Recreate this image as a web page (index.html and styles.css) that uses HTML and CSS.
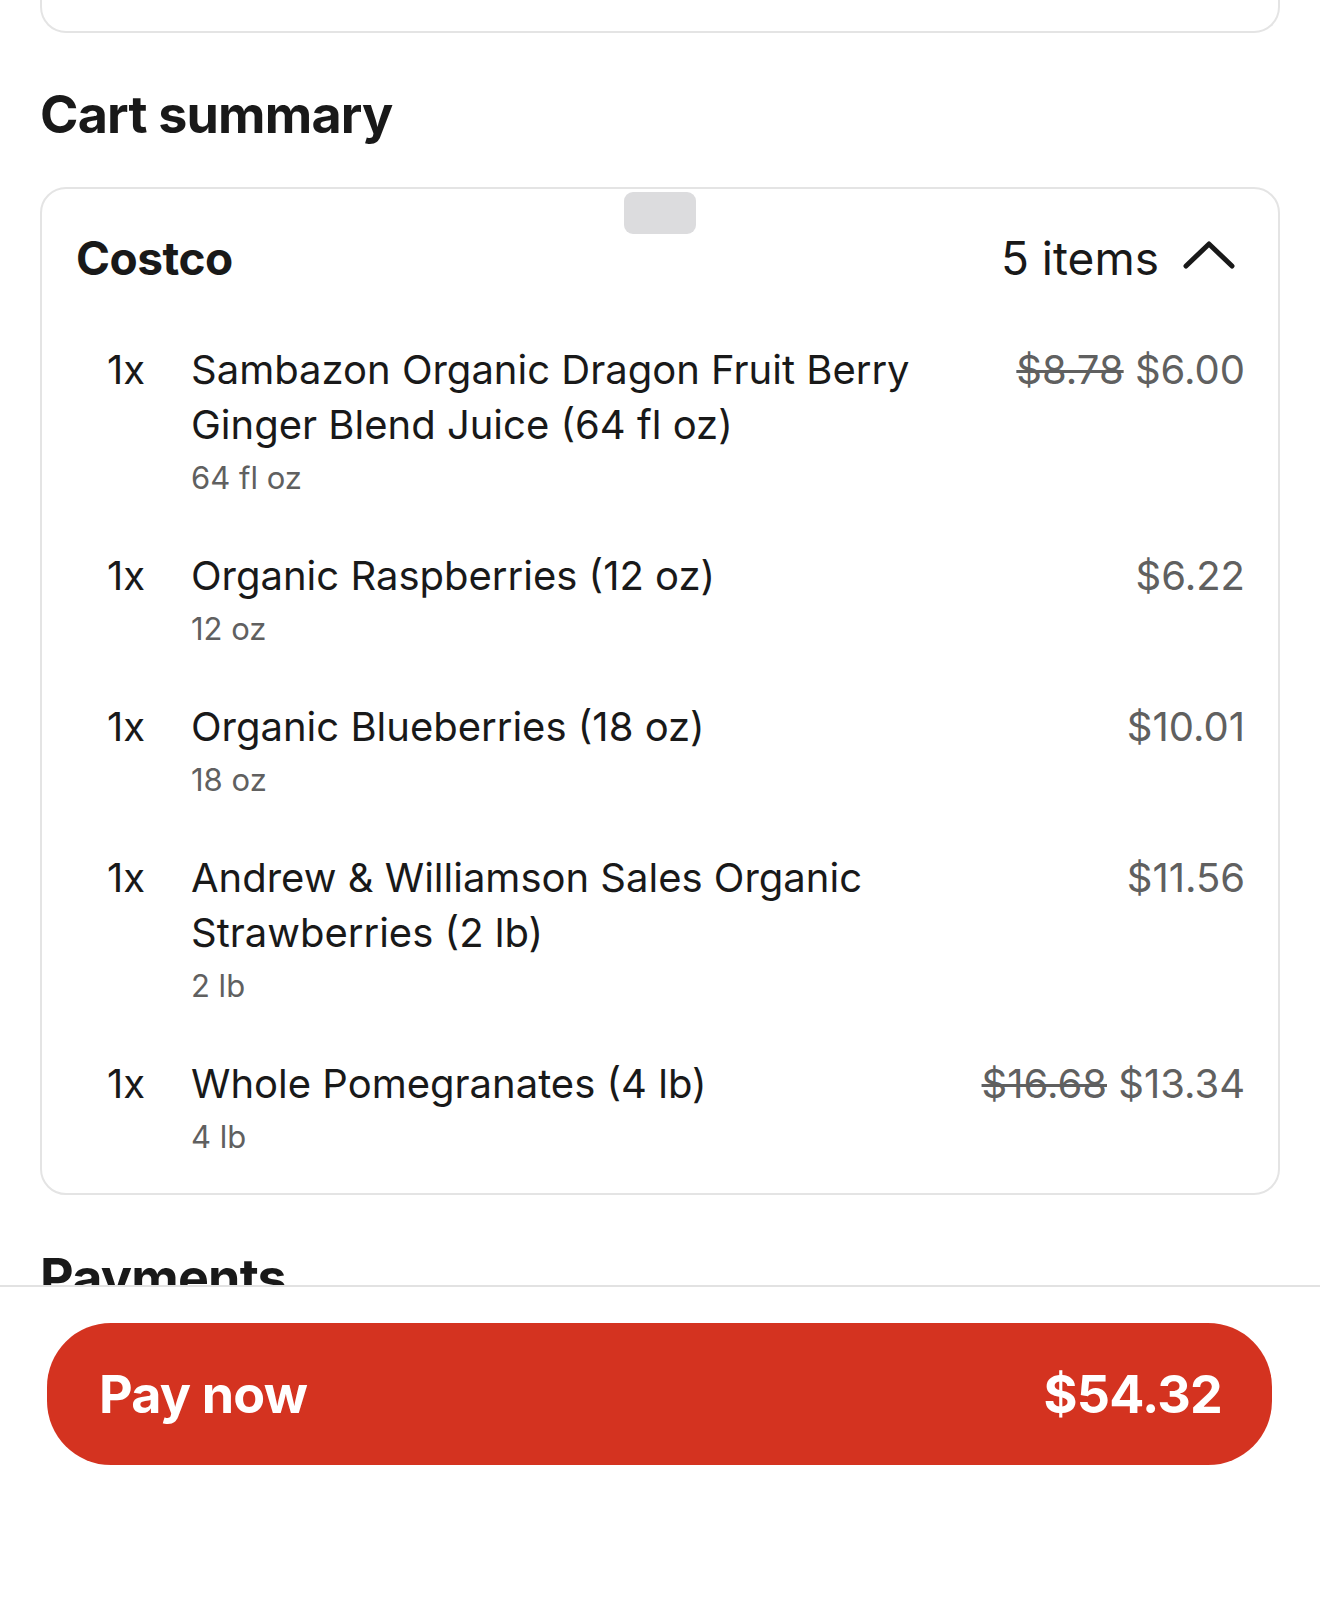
FILE: index.html
```html
<!DOCTYPE html>
<html lang="en">
<head>
  <meta charset="UTF-8" />
  <meta name="viewport" content="width=device-width, initial-scale=1.0"/>
  <title>Checkout</title>
  <link rel="stylesheet" href="styles.css">
</head>
<body>

  <!-- Previous card, scrolled mostly out of view -->
  <div class="prev-card"></div>

  <h2 class="section-title">Cart summary</h2>

  <!-- Store cart -->
  <div class="cart-card">
    <div class="handle"></div>
    <div class="store-row">
      <span class="store-name">Costco</span>
      <span class="store-count">
        5 items
        <svg class="chevron" width="52" height="28" viewBox="0 0 52 28">
          <polyline points="3,25 26,3 49,25" fill="none" stroke="#191919" stroke-width="5" stroke-linecap="round" stroke-linejoin="round"/>
        </svg>
      </span>
    </div>

    <ul class="items">
      <li class="item">
        <span class="qty">1x</span>
        <div class="info">
          <div class="name">Sambazon Organic Dragon Fruit Berry Ginger Blend Juice (64 fl oz)</div>
          <div class="size">64 fl oz</div>
        </div>
        <div class="price"><s>$8.78</s> $6.00</div>
      </li>
      <li class="item">
        <span class="qty">1x</span>
        <div class="info">
          <div class="name">Organic Raspberries (12 oz)</div>
          <div class="size">12 oz</div>
        </div>
        <div class="price">$6.22</div>
      </li>
      <li class="item">
        <span class="qty">1x</span>
        <div class="info">
          <div class="name">Organic Blueberries (18 oz)</div>
          <div class="size">18 oz</div>
        </div>
        <div class="price">$10.01</div>
      </li>
      <li class="item">
        <span class="qty">1x</span>
        <div class="info">
          <div class="name">Andrew &amp; Williamson Sales Organic Strawberries (2 lb)</div>
          <div class="size">2 lb</div>
        </div>
        <div class="price">$11.56</div>
      </li>
      <li class="item">
        <span class="qty">1x</span>
        <div class="info">
          <div class="name">Whole Pomegranates (4 lb)</div>
          <div class="size">4 lb</div>
        </div>
        <div class="price"><s>$16.68</s> $13.34</div>
      </li>
    </ul>
  </div>

  <h2 class="section-title payments">Payments</h2>

  <!-- Sticky pay bar -->
  <div class="pay-bar">
    <button class="pay-btn">
      <span>Pay now</span>
      <span>$54.32</span>
    </button>
  </div>

</body>
</html>
```

FILE: styles.css
```css
/* Global */
body {
  margin: 0;
  padding: 0 40px;
  height: 1605px;
  overflow: hidden;
  background: #fff;
  color: #191919;
  font-family: 'Inter', 'Liberation Sans', sans-serif;
}
/* Card above, only its bottom edge is visible */
.prev-card {
  height: 31px;
  border: 2px solid #e4e4e4;
  border-top: none;
  border-radius: 0 0 26px 26px;
}
/* Section headings */
.section-title {
  margin: 50px 0 40px;
  font-size: 52px;
  line-height: 64px;
  font-weight: 700;
  letter-spacing: -0.8px;
}
.section-title.payments {
  margin-top: 51px;
}
/* Cart card */
.cart-card {
  position: relative;
  border: 2px solid #e4e4e4;
  border-radius: 26px;
  padding: 41px 33px 36px 34px;
}
.handle {
  position: absolute;
  top: 3px;
  left: 50%;
  width: 72px;
  height: 42px;
  margin-left: -36px;
  background: #dcdcde;
  border-radius: 9px;
}
.store-row {
  display: flex;
  justify-content: space-between;
  align-items: center;
  font-size: 46px;
  line-height: 56px;
}
.store-name {
  font-weight: 700;
  letter-spacing: -0.5px;
}
.store-count {
  display: flex;
  align-items: center;
  gap: 24px;
  margin-right: 10px;
}
.chevron {
  margin-top: -6px;
}
/* Items */
.items {
  list-style: none;
  margin: 56px 0 0;
  padding: 0;
  display: flex;
  flex-direction: column;
  gap: 50px;
}
.item {
  display: flex;
  align-items: flex-start;
  font-size: 40px;
  line-height: 55px;
}
.qty {
  width: 84px;
  padding-left: 31px;
  flex-shrink: 0;
}
.info {
  flex: 1;
  max-width: 740px;
}
.size {
  margin-top: 6px;
  font-size: 31px;
  line-height: 40px;
  color: #606060;
}
.price {
  margin-left: auto;
  color: #606060;
  white-space: nowrap;
}
.price s {
  text-decoration-thickness: 3px;
}
/* Bottom pay bar */
.pay-bar {
  position: fixed;
  left: 0;
  right: 0;
  bottom: 0;
  height: 320px;
  box-sizing: border-box;
  background: #fff;
  border-top: 2px solid #e2e2e2;
  padding: 36px 48px 0 47px;
}
.pay-btn {
  width: 100%;
  height: 142px;
  border: none;
  border-radius: 64px;
  background: #d43320;
  color: #fff;
  display: flex;
  justify-content: space-between;
  align-items: center;
  padding: 0 50px 0 52px;
  font-family: inherit;
  font-size: 52px;
  font-weight: 700;
  letter-spacing: -0.8px;
  box-sizing: border-box;
}
```
